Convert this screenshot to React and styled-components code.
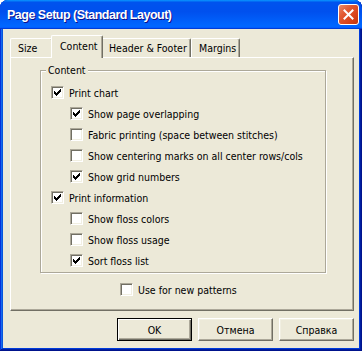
import React from 'react';
import styled, { createGlobalStyle } from 'styled-components';

const GlobalStyle = createGlobalStyle`
  html, body {
    margin: 0;
    padding: 0;
    background: #ffffff;
    overflow: hidden;
  }
  * {
    box-sizing: border-box;
  }
`;

// 탭 목록
const tabs = [
  { label: 'Size', w: 43 },
  { label: 'Content', w: 48, active: true },
  { label: 'Header & Footer', w: 90 },
  { label: 'Margins', w: 49 },
];

// 체크박스 목록 (level 1 = 들여쓰기)
const options = [
  { label: 'Print chart', checked: true, level: 0 },
  { label: 'Show page overlapping', checked: true, level: 1 },
  { label: 'Fabric printing (space between stitches)', checked: false, level: 1 },
  { label: 'Show centering marks on all center rows/cols', checked: false, level: 1 },
  { label: 'Show grid numbers', checked: true, level: 1 },
  { label: 'Print information', checked: true, level: 0 },
  { label: 'Show floss colors', checked: false, level: 1 },
  { label: 'Show floss usage', checked: false, level: 1 },
  { label: 'Sort floss list', checked: true, level: 1 },
];

function CheckMark() {
  // 클래식 윈도우 체크 모양 (7x7 픽셀)
  const cols = [2, 3, 4, 3, 2, 1, 0];
  const d = cols.map((y, x) => `M${x} ${y}h1v3h-1z`).join('');
  return (
    <svg width="7" height="7" viewBox="0 0 7 7" shapeRendering="crispEdges">
      <path d={d} fill="#000" />
    </svg>
  );
}

function Check({ checked, label, level }) {
  return (
    <Row level={level}>
      <Box>{checked && <CheckMark />}</Box>
      <span>{label}</span>
    </Row>
  );
}

function App() {
  return (
    <>
      <GlobalStyle />
      <Window>
        <TitleBar>
          <Title>Page Setup (Standard Layout)</Title>
          <CloseBtn>
            <svg width="11" height="11" viewBox="0 0 11 11">
              <path d="M1.5 1.5L9.5 9.5M9.5 1.5L1.5 9.5" stroke="#fff" strokeWidth="2" strokeLinecap="square" />
            </svg>
          </CloseBtn>
        </TitleBar>
        <Body>
          <TabStrip>
            {tabs.map((t) => (
              <Tab key={t.label} w={t.w} active={t.active}>
                {t.label}
              </Tab>
            ))}
          </TabStrip>
          <Panel>
            <GroupBox>
              <Legend>Content</Legend>
              <RowList>
                {options.map((o) => (
                  <Check key={o.label} {...o} />
                ))}
              </RowList>
            </GroupBox>
            <BottomOption>
              <Check label="Use for new patterns" checked={false} level={0} />
            </BottomOption>
          </Panel>
          <ButtonRow>
            <Button isDefault>OK</Button>
            <Button>Отмена</Button>
            <Button>Справка</Button>
          </ButtonRow>
        </Body>
      </Window>
    </>
  );
}

export default App;

const Window = styled.div`
  width: 362px;
  height: 351px;
  display: flex;
  flex-direction: column;
  background: #0831d9;
  border-radius: 8px 8px 0 0;
  box-shadow: inset -1px -1px #00138c, inset 1px 1px #0831d9,
    inset -2px -2px #001ea0, inset 2px 2px #166aee,
    inset -3px -3px #003bda, inset 3px 3px #0855dd;
  font-family: 'DejaVu Sans Condensed', 'DejaVu Sans', sans-serif;
  font-stretch: condensed;
  font-size: 10.5px;
  color: #000;
`;

const TitleBar = styled.div`
  height: 29px;
  display: flex;
  align-items: center;
  justify-content: space-between;
  padding: 0 3px 0 7px;
  border-radius: 8px 8px 0 0;
  background: linear-gradient(
    180deg,
    #0997ff,
    #0053ee 8%,
    #0050ee 40%,
    #06f 88%,
    #06f 93%,
    #005bff 95%,
    #003dd7 96%,
    #003dd7
  );
`;

const Title = styled.span`
  font-family: 'Liberation Sans', Arial, sans-serif;
  font-stretch: normal;
  font-weight: bold;
  font-size: 12.5px;
  letter-spacing: -0.5px;
  color: #fff;
  text-shadow: 1px 1px #0f1089;
  padding-top: 1px;
`;

const CloseBtn = styled.div`
  width: 21px;
  height: 21px;
  display: flex;
  align-items: center;
  justify-content: center;
  border: 1px solid #fff;
  border-radius: 3px;
  background-color: #d9461e;
  background-image: linear-gradient(135deg, #eb8a68 0%, #e25a33 35%, #d8431b 70%, #c0360e 100%);
`;

const Body = styled.div`
  flex: 1;
  display: flex;
  flex-direction: column;
  margin: 0 3px 3px;
  padding: 6px 5px 7px 7px;
  background: #ece9d8;
`;

const TabStrip = styled.div`
  height: 22px;
  display: flex;
  align-items: flex-end;
`;

const Tab = styled.div`
  position: relative;
  z-index: ${(p) => (p.active ? 2 : 1)};
  width: ${(p) => p.w + (p.active ? 4 : 0)}px;
  height: ${(p) => (p.active ? 23 : 19)}px;
  margin: ${(p) => (p.active ? '0 -2px -1px' : '0')};
  padding: ${(p) => (p.active ? '0 0 3px 8px' : '0 0 0 7px')};
  display: flex;
  align-items: center;
  white-space: nowrap;
  background: #ece9d8;
  border-top: 1px solid #fff;
  border-left: 1px solid #fff;
  border-right: 1px solid #716f64;
  border-radius: 2px 2px 0 0;
  box-shadow: inset -1px 0 #aca899;
`;

const Panel = styled.div`
  flex: 1;
  display: flex;
  flex-direction: column;
  padding: 12px 0 0 29px;
  border: 1px solid;
  border-color: #fff #716f64 #716f64 #fff;
  box-shadow: inset -1px -1px #aca899;
`;

const GroupBox = styled.div`
  width: 286px;
  border: 1px solid #aca899;
  box-shadow: inset 1px 1px #fff, 1px 1px #fff;
  padding-bottom: 1px;
`;

const Legend = styled.div`
  width: fit-content;
  margin: -7px 0 0 5px;
  padding: 0 2px;
  line-height: 13px;
  background: #ece9d8;
`;

const RowList = styled.div`
  padding-top: 5px;
`;

const Row = styled.div`
  height: 21px;
  display: flex;
  align-items: center;
  gap: 5px;
  padding-left: ${(p) => (p.level ? 29 : 10)}px;
  white-space: nowrap;
`;

const BottomOption = styled.div`
  margin: 6px 0 0 70px;
`;

const Box = styled.div`
  width: 13px;
  height: 13px;
  flex: none;
  display: flex;
  align-items: center;
  justify-content: center;
  background: #fff;
  border: 1px solid;
  border-color: #aca899 #fff #fff #aca899;
  box-shadow: inset 1px 1px #716f64, inset -1px -1px #f1efe2;
`;

const ButtonRow = styled.div`
  display: flex;
  justify-content: flex-end;
  gap: 6px;
  margin-top: 7px;
`;

const Button = styled.div`
  width: 75px;
  height: 23px;
  display: flex;
  align-items: center;
  justify-content: center;
  background: #ece9d8;
  border: 1px solid;
  border-color: ${(p) => (p.isDefault ? '#000' : '#fff #716f64 #716f64 #fff')};
  box-shadow: ${(p) =>
    p.isDefault
      ? 'inset 1px 1px #fff, inset -1px -1px #716f64, inset -2px -2px #aca899'
      : 'inset -1px -1px #aca899, inset 1px 1px #f1efe2'};
`;
